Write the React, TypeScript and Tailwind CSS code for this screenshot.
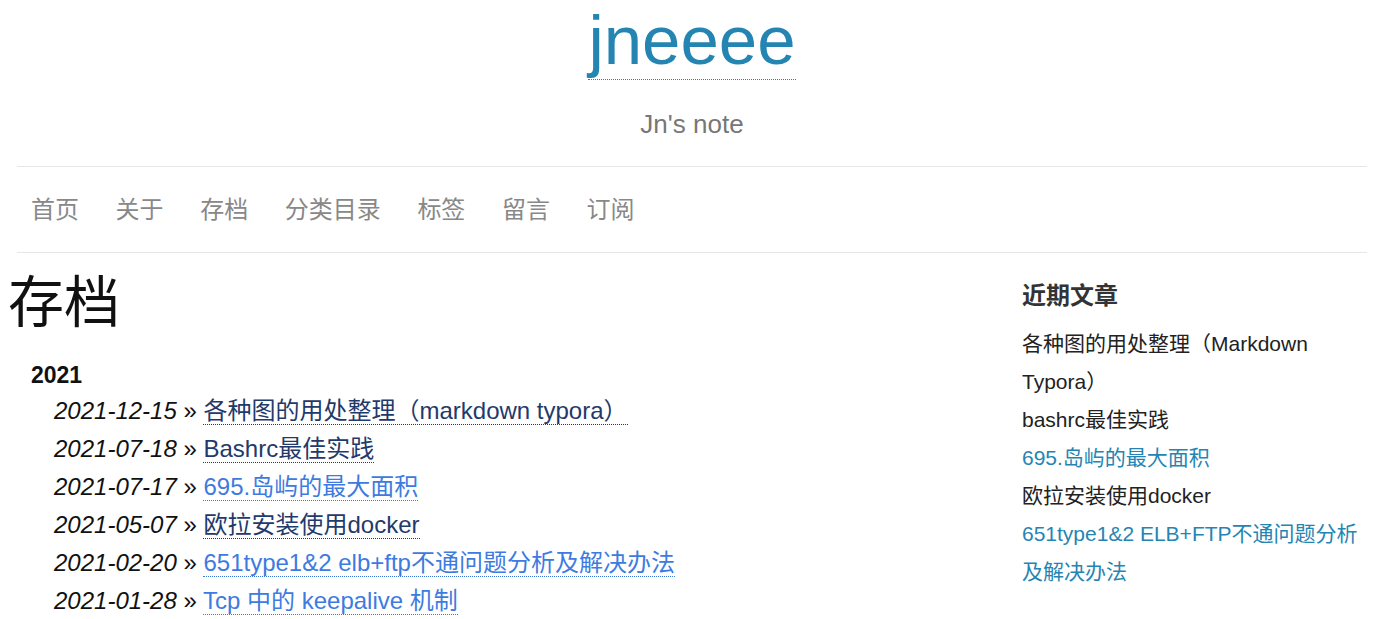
import React from "react";

const font = { fontFamily: '"Liberation Sans", Arial, "Noto Sans CJK SC", sans-serif' };

const navItems = ["首页", "关于", "存档", "分类目录", "标签", "留言", "订阅"];

const posts = [
  { date: "2021-12-15", title: "各种图的用处整理（markdown typora）", visited: true },
  { date: "2021-07-18", title: "Bashrc最佳实践", visited: true },
  { date: "2021-07-17", title: "695.岛屿的最大面积", visited: false },
  { date: "2021-05-07", title: "欧拉安装使用docker", visited: true },
  { date: "2021-02-20", title: "651type1&2 elb+ftp不通问题分析及解决办法", visited: false },
  { date: "2021-01-28", title: "Tcp 中的 keepalive 机制", visited: false },
];

const recent = [
  { title: "各种图的用处整理（Markdown Typora）", visited: true },
  { title: "bashrc最佳实践", visited: true },
  { title: "695.岛屿的最大面积", visited: false },
  { title: "欧拉安装使用docker", visited: true },
  { title: "651type1&2 ELB+FTP不通问题分析及解决办法", visited: false },
];

export default function App() {
  return (
    <div className="w-[1388px] h-[619px] overflow-hidden bg-white" style={font}>
      <header className="text-center pt-[6px] pr-[4px]">
        <div className="text-[69px] leading-[70px]">
          <a className="text-[#2585b2] border-b border-dotted border-[#2585b2]">jneeee</a>
        </div>
        <p className="mt-[35px] text-[26px] leading-[26px] text-[#777]">Jn's note</p>
      </header>
      <nav className="ml-[17px] mr-[21px] mt-[29px] h-[87px] border-y border-[#e6e6e6] flex items-center gap-[36.6px] pl-[14px] text-[24px] text-[#888]">
        {navItems.map((n) => (
          <a key={n}>{n}</a>
        ))}
      </nav>
      <div className="flex">
        <main className="flex-1 pl-[8px] pt-[22px]">
          <h1 className="text-[56px] leading-[56px] text-[#111]">存档</h1>
          <div className="mt-[25px] pl-[23px] text-[23px] leading-[38px] font-bold text-[#111]">2021</div>
          <ul className="mt-[-2px] pl-[46px] text-[24px] leading-[38px]">
            {posts.map((p) => (
              <li key={p.date} className="text-[#111]">
                <span className="italic">{p.date}</span>
                <span> » </span>
                <a
                  className={
                    p.visited
                      ? "text-[#1f3a6b] border-b border-dotted border-[#1f3a6b]"
                      : "text-[#3d7be0] border-b border-dotted border-[#3d7be0]"
                  }
                >
                  {p.title}
                </a>
              </li>
            ))}
          </ul>
        </main>
        <aside className="w-[345px] mr-[21px] pt-[24px]">
          <h3 className="text-[24px] leading-[38px] font-bold text-[#333]">近期文章</h3>
          <ul className="mt-[10px] text-[21px] leading-[38px]">
            {recent.map((r) => (
              <li key={r.title}>
                <a className={r.visited ? "text-[#222]" : "text-[#2585b2]"}>{r.title}</a>
              </li>
            ))}
          </ul>
        </aside>
      </div>
    </div>
  );
}
